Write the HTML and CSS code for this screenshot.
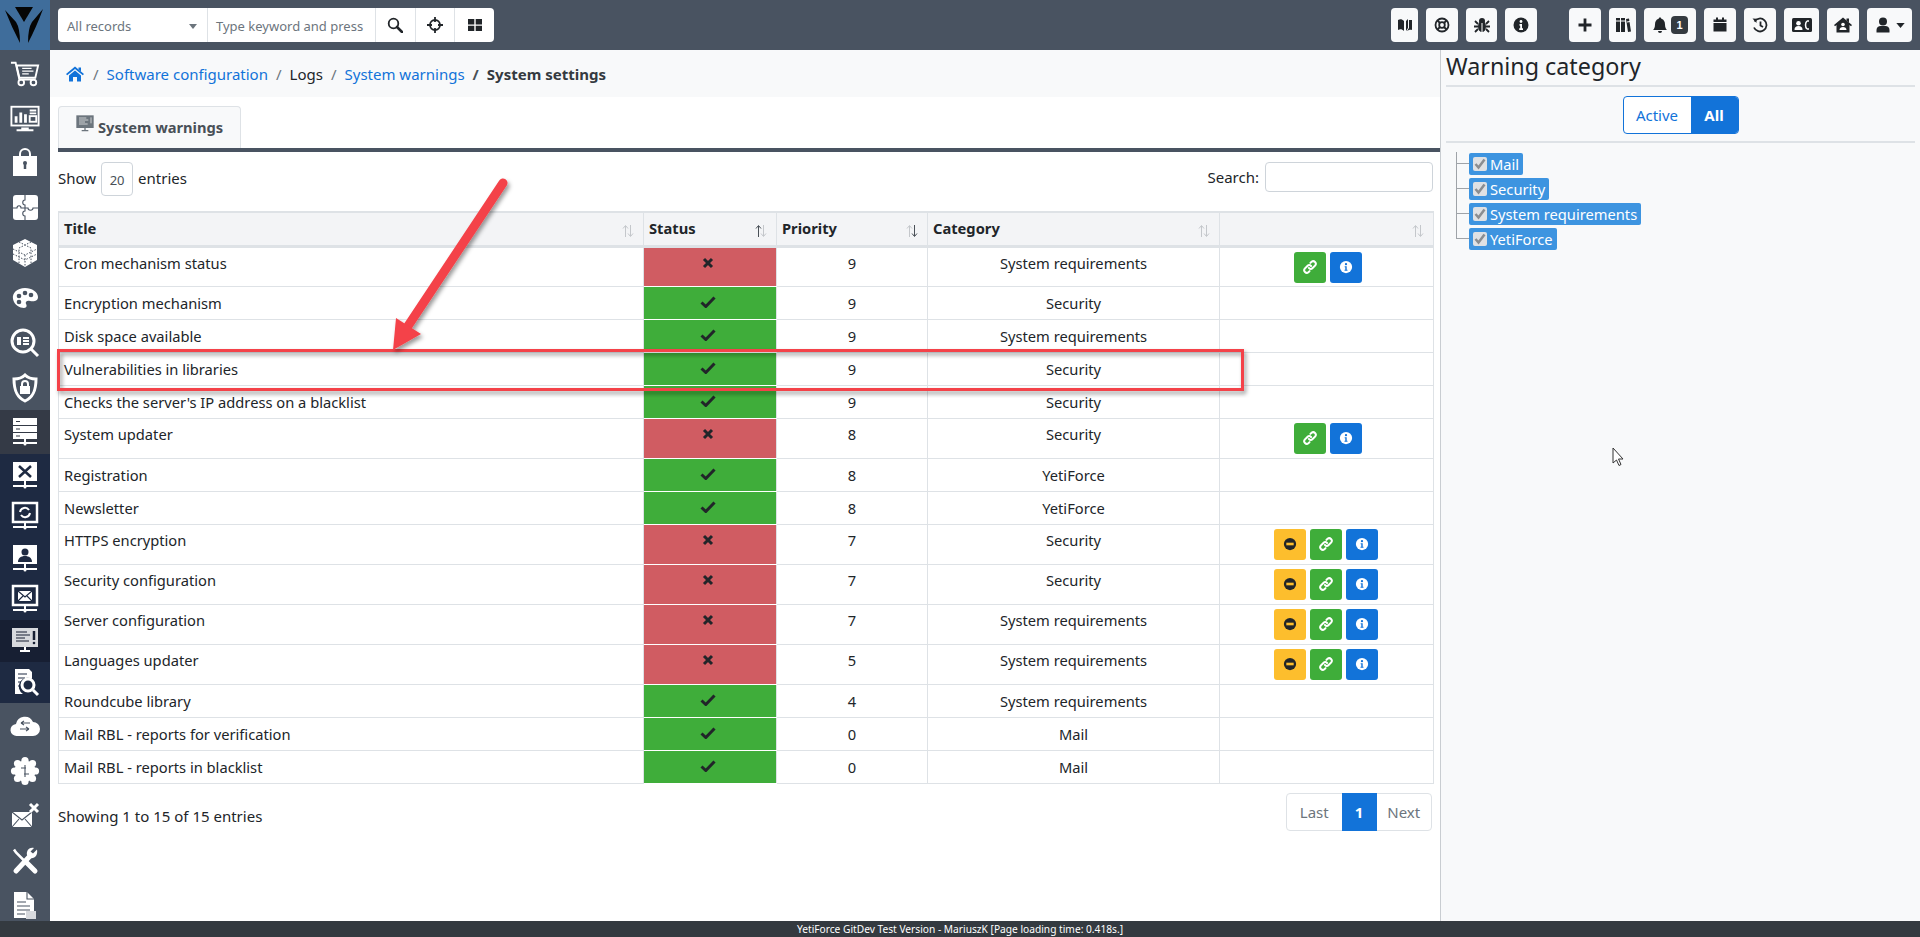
FILE: index.html
```html
<!DOCTYPE html>
<html lang="en">
<head>
<meta charset="utf-8">
<title>System warnings</title>
<link rel="stylesheet" href="styles.css">
</head>
<body>
<svg class="sprite" width="0" height="0" aria-hidden="true">
<defs>
<symbol id="s-cart" viewBox="0 0 32 30"><path d="M1 4h5l4 18h17" class="w"/><path d="M7 7h23l-3 13H10z" class="w"/><path d="M13 10h10M13 13h12M13 16h7" class="w1"/><circle cx="12" cy="25" r="3" class="w"/><circle cx="25" cy="25" r="3" class="w"/></symbol>
<symbol id="s-chart" viewBox="0 0 32 30"><rect x="1.500" y="3" width="29" height="20" class="w"/><path d="M5 20v-7h3v7zM10 20V9h3v11zM15 20v-9h3v9z" class="f"/><path d="M21 7h7M21 10h7" class="w"/><rect x="21" y="13" width="7" height="6" class="w"/><path d="M12 26h8M7 28h18" class="w"/></symbol>
<symbol id="s-lock" viewBox="0 0 30 30"><path d="M3 8h24v20H3z" class="f"/><path d="M10 8V6a5 5 0 0 1 10 0v2" class="w"/><path d="M15 15v6" class="kb"/><circle cx="15" cy="15" r="2" class="kf"/></symbol>
<symbol id="s-puzzle" viewBox="0 0 30 30"><rect x="3" y="2" width="25" height="25" rx="3" class="f"/><path d="M15 2v5c-3 0-3 5 0 5v3h-4c0-3-4-3-4 0H3M15 15h3c0 3 5 3 5 0h5M15 15v3c-3 0-3 5 0 5v4" class="k"/></symbol>
<symbol id="s-cube" viewBox="0 0 30 30"><path d="M15 1l12 6v15l-12 7-12-7V7z" class="f"/><path d="M3 11l12 6 12-6M3 16l12 6 12-6M9 4l12 6v15M21 4L9 10v15M15 17v12" class="kd"/></symbol>
<symbol id="s-palette" viewBox="0 0 30 30"><path d="M15 5C7 5 2 10 3 16c1 6 7 9 11 9 3 0 3-3 2-4-1-2 1-4 4-3 4 1 8 0 8-4 0-5-6-9-13-9z" class="f"/><circle cx="9" cy="13" r="2.300" class="kf"/><circle cx="15" cy="10" r="2.300" class="kf"/><circle cx="21" cy="12" r="2.300" class="kf"/><circle cx="9" cy="19" r="2.300" class="kf"/></symbol>
<symbol id="s-search" viewBox="0 0 30 30"><circle cx="13" cy="13" r="11" class="wb"/><rect x="7" y="9" width="4" height="8" class="f"/><path d="M13 10h6M13 13h6M13 16h6" class="w"/><path d="M21 21l7 7" class="wb"/></symbol>
<symbol id="s-shield" viewBox="0 0 30 30"><path d="M15 2c3 3 7 4 11 4 0 10-2 18-11 22C6 24 4 16 4 6c4 0 8-1 11-4z" class="wb"/><rect x="10" y="13" width="10" height="8" class="f"/><path d="M12 13v-2a3 3 0 0 1 6 0v2" class="w"/></symbol>
<symbol id="s-server" viewBox="0 0 30 30"><rect x="3" y="1" width="24" height="7" class="f"/><rect x="3" y="9" width="24" height="6" class="f"/><rect x="3" y="16" width="24" height="6" class="f"/><path d="M6 4.500h4M6 12h4M6 19h4" class="k"/><path d="M3 26h24M15 22v5" class="w"/><circle cx="15" cy="27" r="1.500" class="f"/></symbol>
<symbol id="s-mon-tools" viewBox="0 0 30 30"><rect x="3" y="2" width="24" height="19" class="f"/><path d="M9 6l12 11M21 6L9 17" class="kb"/><path d="M3 26h24M15 21v6" class="w"/><circle cx="15" cy="27" r="1.500" class="f"/></symbol>
<symbol id="s-mon-sync" viewBox="0 0 30 30"><rect x="3" y="2" width="24" height="19" class="wn"/><path d="M10 11a5 5 0 0 1 9-2M20 12a5 5 0 0 1-9 2" class="w"/><path d="M3 26h24M15 21v6" class="w"/><circle cx="15" cy="27" r="1.500" class="f"/></symbol>
<symbol id="s-mon-user" viewBox="0 0 30 30"><rect x="3" y="2" width="24" height="19" class="f"/><circle cx="15" cy="9" r="3.500" class="kf"/><path d="M8 19c0-4 3-6 7-6s7 2 7 6z" class="kf"/><path d="M3 26h24M15 21v6" class="w"/><circle cx="15" cy="27" r="1.500" class="f"/></symbol>
<symbol id="s-mon-mail" viewBox="0 0 30 30"><rect x="3" y="2" width="24" height="19" class="wn"/><rect x="8" y="7" width="14" height="10" class="f"/><path d="M8 7l7 6 7-6M8 17l5-5M22 17l-5-5" class="k"/><path d="M3 26h24M15 21v6" class="w"/><circle cx="15" cy="27" r="1.500" class="f"/></symbol>
<symbol id="s-mon-warn" viewBox="0 0 30 30"><rect x="2" y="2" width="26" height="19" class="fg"/><path d="M6 6h11M6 9h14M6 12h9M6 15h13" class="k"/><path d="M24 5v9" class="kb"/><circle cx="24" cy="17" r="1.300" class="kf"/><path d="M10 25h10M15 21v4" class="w"/></symbol>
<symbol id="s-doc-search" viewBox="0 0 30 30"><path d="M5 2h14l3 3v7a8 8 0 0 0-9 15H5z" class="f"/><path d="M8 7h9M8 11h7M8 15h4M8 19h3" class="k"/><circle cx="18" cy="18" r="6" class="wb"/><path d="M23 23l5 5" class="wb"/></symbol>
<symbol id="s-cloud" viewBox="0 0 30 30"><path d="M7 25a6 6 0 0 1-1-12 9 9 0 0 1 17-2 7 7 0 0 1 0 14z" class="f"/><path d="M11 12h9M11 12l3-2M11 12l3 2M10 18h9M19 18l-3-2M19 18l-3 2" class="k"/></symbol>
<symbol id="s-gear" viewBox="0 0 30 30"><circle cx="15" cy="15" r="10.500" class="f"/><circle cx="15" cy="4.500" r="3.600" class="f"/><circle cx="15" cy="25.500" r="3.600" class="f"/><circle cx="4.500" cy="15" r="3.600" class="f"/><circle cx="25.500" cy="15" r="3.600" class="f"/><circle cx="7.500" cy="7.500" r="3.600" class="f"/><circle cx="22.500" cy="7.500" r="3.600" class="f"/><circle cx="7.500" cy="22.500" r="3.600" class="f"/><circle cx="22.500" cy="22.500" r="3.600" class="f"/><path d="M15 9v12M11 12h5M19 18h-5" class="k"/></symbol>
<symbol id="s-mail-x" viewBox="0 0 30 30"><path d="M2 11h20v15H2z" class="f"/><path d="M2 11l10 8 10-8M2 26l7-8M22 26l-7-8" class="k"/><path d="M20 3l8 8M28 3l-8 8" class="wb"/></symbol>
<symbol id="s-tools" viewBox="0 0 30 30"><path d="M4 3.500l2 3 11 11" class="wt2"/><path d="M16 16l9 9" class="wc"/><path d="M19.500 10.500L6 25" class="wc"/><path d="M27 3.500l-4 4-2.500-2L24 2c-4-1.500-8 2-7 7l3 3c5 1 8-3 7-8.500z" class="f"/></symbol>
<symbol id="s-doc" viewBox="0 0 30 30"><path d="M4 1h13l7 7v19H4z" class="f"/><path d="M17 1v7h7" class="k"/><path d="M7 11h9M7 15h13M7 19h13M7 23h8" class="k"/><rect x="16" y="20" width="10" height="8" class="fg"/></symbol>

<symbol id="i-search" viewBox="0 0 16 16"><circle cx="6.500" cy="6.500" r="4.800" class="kx"/><path d="M10 10l5 5" class="kxw"/></symbol>
<symbol id="i-target" viewBox="0 0 16 16"><circle cx="8" cy="8" r="5" class="kx"/><path d="M8 0v5M8 11v5M0 8h5M11 8h5" class="kx"/></symbol>
<symbol id="i-grid" viewBox="0 0 16 16"><path d="M1 2h6.300v5.500H1zM8.700 2H15v5.500H8.700zM1 8.800h6.300V14H1zM8.700 8.800H15V14H8.700z"/></symbol>
<symbol id="i-book" viewBox="0 0 16 16"><path d="M1 3c2-1 4-1 6 1v10c-2-2-4-2-6-1zM9 4l2-2v9l-2 3z"/><path d="M12 3h3v10c-1.500-.5-3-.3-5 1l2-3z"/></symbol>
<symbol id="i-ring" viewBox="0 0 16 16"><circle cx="8" cy="8" r="6.500" class="kx"/><circle cx="8" cy="8" r="2.800" class="kx"/><path d="M3.500 3.500l2.500 2.500M12.500 3.500L10 6M3.500 12.500L6 10M12.500 12.500L10 10" class="kx"/></symbol>
<symbol id="i-bug" viewBox="0 0 16 16"><ellipse cx="8" cy="9.500" rx="4" ry="5.500"/><circle cx="8" cy="4" r="3"/><path d="M1 4l3 3M15 4l-3 3M0 9.500h4M16 9.500h-4M1 15l3-3M15 15l-3-3" class="kx"/><path d="M8 6v9" class="wt"/></symbol>
<symbol id="i-info" viewBox="0 0 16 16"><circle cx="8" cy="8" r="7.500"/><circle cx="8" cy="4.500" r="1.400" class="wf"/><path d="M6.500 7h2.500v4.300h1V13H6.200v-1.700h1V8.700h-.7z" class="wf"/></symbol>
<symbol id="i-plus" viewBox="0 0 16 16"><path d="M8 1.500v13M1.500 8h13" class="kxb"/></symbol>
<symbol id="i-books" viewBox="0 0 16 16"><path d="M1 1h4v14H1zM6 1h4v14H6zM11 2l3-.500 2 13-3 .500z"/><path d="M1 4h4M6 4h4M12 5l3-.500" class="wt"/></symbol>
<symbol id="i-bell" viewBox="0 0 16 16"><path d="M8 0.500c1 0 1.300.7 1.300 1.300C12 2.500 13 5 13 7.500c0 3 1 4.500 2 5.500H1c1-1 2-2.500 2-5.500C3 5 4 2.500 6.700 1.800 6.700 1.200 7 .5 8 .5z"/><path d="M6 14h4a2 2 0 0 1-4 0z"/></symbol>
<symbol id="i-cal" viewBox="0 0 16 16"><path d="M1.500 6h13v8.500h-13zM1.500 2.500h13V5h-13zM4 .5h2v3H4zM10 .5h2v3h-2z"/></symbol>
<symbol id="i-history" viewBox="0 0 16 16"><path d="M2.500 4.500A6.500 6.500 0 1 1 2 10.500" class="kx"/><path d="M0.500 1.500l4 .2v4.300z"/><path d="M8.500 4.500V8.500l2.500 1.500" class="kx"/></symbol>
<symbol id="i-card" viewBox="0 0 20 16"><rect x="0" y="1" width="20" height="14" rx="1.500"/><circle cx="6.500" cy="6.200" r="2.300" class="wf"/><path d="M2.500 13c0-3 1.500-4 4-4s4 1 4 4z" class="wf"/><path d="M15 4c-2 2-2 6 0 8" class="wl"/><path d="M15 4h2M15 12h2" class="wl"/></symbol>
<symbol id="i-home" viewBox="0 0 18 16"><path d="M9 .5L18 8l-1 1.200L15.500 8v7.500h-13V8L1 9.200 0 8z"/><path d="M12.500 1.500H15v4l-2.500-2z"/><circle cx="9" cy="7.500" r="1.800" class="wf"/><path d="M5.500 13c0-2 1.500-3 3.500-3s3.500 1 3.500 3z" class="wf"/></symbol>
<symbol id="i-user" viewBox="0 0 16 16"><circle cx="8" cy="4.500" r="4"/><path d="M1.500 15.500V13c0-2.500 2-4 4-4h5c2 0 4 1.500 4 4v2.500z"/></symbol>
<symbol id="i-caret" viewBox="0 0 10 6"><path d="M0 0h10L5 6z"/></symbol>
<symbol id="i-house" viewBox="0 0 18 16"><path d="M9 .5L18 8l-1.200 1.300L9 2.900 1.200 9.300 0 8z"/><path d="M12.500 1.500H15v4l-2.500-2zM3 9.500L9 4.500l6 5v6h-4v-4.500H7v4.500H3z"/></symbol>
<symbol id="i-cross" viewBox="0 0 12 12"><path d="M2 2l8 8M10 2l-8 8" class="cb"/></symbol>
<symbol id="i-check" viewBox="0 0 16 12"><path d="M1.500 6.500l4.300 4L14.500 1.500" class="cb"/></symbol>
<symbol id="i-link" viewBox="0 0 16 16"><path d="M6.800 9.200a3 3 0 0 0 4.200 0l3-3a3 3 0 0 0-4.200-4.200L8.500 3.300M9.200 6.800a3 3 0 0 0-4.200 0l-3 3A3 3 0 0 0 6.200 14l1.300-1.300" class="cw"/></symbol>
<symbol id="i-minus" viewBox="0 0 16 16"><circle cx="8" cy="8" r="7"/><rect x="3.800" y="6.500" width="8.400" height="3" class="yf"/></symbol>
<symbol id="i-inf" viewBox="0 0 16 16"><circle cx="8" cy="8" r="7" class="wf"/><circle cx="8" cy="4.800" r="1.300" class="bf"/><path d="M6.500 7h2.300v4h.9v1.300H6.300V11h.9V8.300h-.7z" class="bf"/></symbol>
<symbol id="i-sort" viewBox="0 0 12 14"><path d="M3.500 13V2M1 4.500L3.500 1.500 6 4.500" class="su"/><path d="M8.500 1v11M6 9.500L8.500 12.500 11 9.500" class="sd"/></symbol>
<symbol id="i-tick" viewBox="0 0 14 14"><rect width="14" height="14" rx="2" class="tb-box"/><path d="M2.500 7l3 3.500 6-8" class="tc"/></symbol>
</defs>
</svg>

<div class="app">
  <aside class="sidebar">
    <a class="logo" href="#"><svg class="logo-svg" viewBox="0 0 50 50"><path d="M15 7h18l-9 15z"/><path d="M5 10l11 12q4 6 4 21Q12 28 5 10zM43 9L32 22q-4 6-4 21 8-15 15-34z"/></svg></a>
    <nav class="menu">
      <a class="mi"><svg><use href="#s-cart"/></svg></a>
      <a class="mi"><svg><use href="#s-chart"/></svg></a>
      <a class="mi"><svg><use href="#s-lock"/></svg></a>
      <a class="mi"><svg><use href="#s-puzzle"/></svg></a>
      <a class="mi"><svg><use href="#s-cube"/></svg></a>
      <a class="mi"><svg><use href="#s-palette"/></svg></a>
      <a class="mi"><svg><use href="#s-search"/></svg></a>
      <a class="mi"><svg><use href="#s-shield"/></svg></a>
      <a class="mi open"><svg><use href="#s-server"/></svg></a>
      <a class="mi sub"><svg><use href="#s-mon-tools"/></svg></a>
      <a class="mi sub"><svg><use href="#s-mon-sync"/></svg></a>
      <a class="mi sub"><svg><use href="#s-mon-user"/></svg></a>
      <a class="mi sub"><svg><use href="#s-mon-mail"/></svg></a>
      <a class="mi sub cur"><svg><use href="#s-mon-warn"/></svg></a>
      <a class="mi sub"><svg><use href="#s-doc-search"/></svg></a>
      <a class="mi"><svg><use href="#s-cloud"/></svg></a>
      <a class="mi"><svg><use href="#s-gear"/></svg></a>
      <a class="mi"><svg><use href="#s-mail-x"/></svg></a>
      <a class="mi"><svg><use href="#s-tools"/></svg></a>
      <a class="mi"><svg><use href="#s-doc"/></svg></a>
    </nav>
  </aside>
  <div class="right">
    <header class="topbar">
      <div class="searchgroup">
        <div class="sg-select"><span>All records</span><svg class="caret"><use href="#i-caret"/></svg></div>
        <div class="sg-input">Type keyword and press</div>
        <button class="sg-btn"><svg class="ic"><use href="#i-search"/></svg></button>
        <button class="sg-btn"><svg class="ic"><use href="#i-target"/></svg></button>
        <button class="sg-btn"><svg class="ic"><use href="#i-grid"/></svg></button>
      </div>
      <div class="tb-icons">
        <button class="tb w27"><svg class="ic"><use href="#i-book"/></svg></button>
        <button class="tb w32"><svg class="ic"><use href="#i-ring"/></svg></button>
        <button class="tb w31"><svg class="ic"><use href="#i-bug"/></svg></button>
        <button class="tb w32"><svg class="ic"><use href="#i-info"/></svg></button>
        <button class="tb w32 sep"><svg class="ic"><use href="#i-plus"/></svg></button>
        <button class="tb w27"><svg class="ic"><use href="#i-books"/></svg></button>
        <button class="tb w52"><svg class="ic"><use href="#i-bell"/></svg><span class="badge">1</span></button>
        <button class="tb w32"><svg class="ic"><use href="#i-cal"/></svg></button>
        <button class="tb w32"><svg class="ic"><use href="#i-history"/></svg></button>
        <button class="tb w35"><svg class="ic wide"><use href="#i-card"/></svg></button>
        <button class="tb w32"><svg class="ic wide"><use href="#i-home"/></svg></button>
        <button class="tb w45"><svg class="ic"><use href="#i-user"/></svg><svg class="caret dark"><use href="#i-caret"/></svg></button>
      </div>
    </header>
    <div class="body">
      <main class="content">
        <nav class="crumbs">
          <svg class="home"><use href="#i-house"/></svg>
          <span class="sl">/</span><a class="lnk">Software configuration</a>
          <span class="sl">/</span><span>Logs</span>
          <span class="sl">/</span><a class="lnk">System warnings</a>
          <span class="sl b">/</span><strong>System settings</strong>
        </nav>
        <div class="pane">
          <div class="tabs"><div class="tab"><svg class="tab-ic" viewBox="0 0 30 30"><rect x="2" y="2" width="26" height="19" class="ti-a"/><path d="M6 6h11M6 9h14M6 12h9M6 15h13" class="ti-b"/><path d="M24 5v9" class="ti-b"/><path d="M10 25h10M15 21v4" class="ti-c"/></svg>System warnings</div></div>
          <div class="dt-top">
            <label class="len">Show <span class="len-box">20</span> entries</label>
            <label class="srch">Search: <span class="srch-box"></span></label>
          </div>
          <table class="grid">
            <colgroup><col class="c1"><col class="c2"><col class="c3"><col class="c4"><col class="c5"></colgroup>
            <thead><tr>
              <th>Title<svg class="sort"><use href="#i-sort"/></svg></th>
              <th>Status<svg class="sort up"><use href="#i-sort"/></svg></th>
              <th>Priority<svg class="sort down"><use href="#i-sort"/></svg></th>
              <th>Category<svg class="sort"><use href="#i-sort"/></svg></th>
              <th><svg class="sort"><use href="#i-sort"/></svg></th>
            </tr></thead>
            <tbody>
              <tr class="tall"><td>Cron mechanism status</td><td class="st bad"><svg class="mk"><use href="#i-cross"/></svg></td><td class="ct">9</td><td class="ct">System requirements</td><td class="ac"><div class="btns two"><span class="bt g"><svg><use href="#i-link"/></svg></span><span class="bt bl"><svg><use href="#i-inf"/></svg></span></div></td></tr>
              <tr><td>Encryption mechanism</td><td class="st ok"><svg class="mk"><use href="#i-check"/></svg></td><td class="ct">9</td><td class="ct">Security</td><td></td></tr>
              <tr><td>Disk space available</td><td class="st ok"><svg class="mk"><use href="#i-check"/></svg></td><td class="ct">9</td><td class="ct">System requirements</td><td></td></tr>
              <tr><td>Vulnerabilities in libraries</td><td class="st ok"><svg class="mk"><use href="#i-check"/></svg></td><td class="ct">9</td><td class="ct">Security</td><td></td></tr>
              <tr><td>Checks the server's IP address on a blacklist</td><td class="st ok"><svg class="mk"><use href="#i-check"/></svg></td><td class="ct">9</td><td class="ct">Security</td><td></td></tr>
              <tr class="tall"><td>System updater</td><td class="st bad"><svg class="mk"><use href="#i-cross"/></svg></td><td class="ct">8</td><td class="ct">Security</td><td class="ac"><div class="btns two"><span class="bt g"><svg><use href="#i-link"/></svg></span><span class="bt bl"><svg><use href="#i-inf"/></svg></span></div></td></tr>
              <tr><td>Registration</td><td class="st ok"><svg class="mk"><use href="#i-check"/></svg></td><td class="ct">8</td><td class="ct">YetiForce</td><td></td></tr>
              <tr><td>Newsletter</td><td class="st ok"><svg class="mk"><use href="#i-check"/></svg></td><td class="ct">8</td><td class="ct">YetiForce</td><td></td></tr>
              <tr class="tall"><td>HTTPS encryption</td><td class="st bad"><svg class="mk"><use href="#i-cross"/></svg></td><td class="ct">7</td><td class="ct">Security</td><td class="ac"><div class="btns"><span class="bt y"><svg><use href="#i-minus"/></svg></span><span class="bt g"><svg><use href="#i-link"/></svg></span><span class="bt bl"><svg><use href="#i-inf"/></svg></span></div></td></tr>
              <tr class="tall"><td>Security configuration</td><td class="st bad"><svg class="mk"><use href="#i-cross"/></svg></td><td class="ct">7</td><td class="ct">Security</td><td class="ac"><div class="btns"><span class="bt y"><svg><use href="#i-minus"/></svg></span><span class="bt g"><svg><use href="#i-link"/></svg></span><span class="bt bl"><svg><use href="#i-inf"/></svg></span></div></td></tr>
              <tr class="tall"><td>Server configuration</td><td class="st bad"><svg class="mk"><use href="#i-cross"/></svg></td><td class="ct">7</td><td class="ct">System requirements</td><td class="ac"><div class="btns"><span class="bt y"><svg><use href="#i-minus"/></svg></span><span class="bt g"><svg><use href="#i-link"/></svg></span><span class="bt bl"><svg><use href="#i-inf"/></svg></span></div></td></tr>
              <tr class="tall"><td>Languages updater</td><td class="st bad"><svg class="mk"><use href="#i-cross"/></svg></td><td class="ct">5</td><td class="ct">System requirements</td><td class="ac"><div class="btns"><span class="bt y"><svg><use href="#i-minus"/></svg></span><span class="bt g"><svg><use href="#i-link"/></svg></span><span class="bt bl"><svg><use href="#i-inf"/></svg></span></div></td></tr>
              <tr><td>Roundcube library</td><td class="st ok"><svg class="mk"><use href="#i-check"/></svg></td><td class="ct">4</td><td class="ct">System requirements</td><td></td></tr>
              <tr><td>Mail RBL - reports for verification</td><td class="st ok"><svg class="mk"><use href="#i-check"/></svg></td><td class="ct">0</td><td class="ct">Mail</td><td></td></tr>
              <tr><td>Mail RBL - reports in blacklist</td><td class="st ok"><svg class="mk"><use href="#i-check"/></svg></td><td class="ct">0</td><td class="ct">Mail</td><td></td></tr>
            </tbody>
          </table>
          <div class="dt-bottom">
            <div class="info">Showing 1 to 15 of 15 entries</div>
            <div class="pager"><a class="pg">Last</a><a class="pg cur">1</a><a class="pg">Next</a></div>
          </div>
        </div>
      </main>
      <aside class="panel">
        <h2 class="panel-title">Warning category</h2>
        <div class="toggle-row"><div class="toggle"><span class="tg">Active</span><span class="tg on">All</span></div></div>
        <ul class="tree">
          <li><span class="node"><svg class="tick"><use href="#i-tick"/></svg>Mail</span></li>
          <li><span class="node"><svg class="tick"><use href="#i-tick"/></svg>Security</span></li>
          <li><span class="node"><svg class="tick"><use href="#i-tick"/></svg>System requirements</span></li>
          <li><span class="node"><svg class="tick"><use href="#i-tick"/></svg>YetiForce</span></li>
        </ul>
      </aside>
    </div>
  </div>
</div>
<footer class="foot">YetiForce GitDev Test Version - MariuszK [Page loading time: 0.418s.]</footer>

<svg class="annot" viewBox="0 0 1920 937" aria-hidden="true">
  <defs><filter id="sh" x="-10%" y="-10%" width="120%" height="130%"><feDropShadow dx="2" dy="3" stdDeviation="2" flood-color="#000" flood-opacity=".4"/></filter></defs>
  <rect class="an-rect" x="58.500" y="350.500" width="1184" height="39"/>
  <g class="an-arrow"><path class="an-shaft" d="M503 183L408 326"/><path class="an-head" d="M393 350L396 318L421 334z"/></g>
  <path class="cursor" d="M1613 448v15l3.500-3 2.500 5.500 2-1-2.500-5.500h4.500z"/>
</svg>
</body>
</html>
```

FILE: styles.css
```css
* { box-sizing: border-box; }
html, body { margin: 0; height: 100%; overflow: hidden; }
body {
  font-family: "Noto Sans", "Open Sans", "DejaVu Sans", sans-serif;
  font-size: 14.700px;
  line-height: 20px;
  color: #212529;
  background: #fff;
  position: relative;
}
.sprite { position: absolute; }
.app { display: flex; height: 921px; }

/* sprite classes */
.f { fill: #fff; }
.fg { fill: #d7d9dd; }
.w { fill: none; stroke: #fff; stroke-width: 2; }
.w1 { fill: none; stroke: #fff; stroke-width: 1.300; }
.wn { fill: none; stroke: #fff; stroke-width: 2.500; }
.wb { fill: none; stroke: #fff; stroke-width: 3; }
.wc { fill: none; stroke: #fff; stroke-width: 5; stroke-linecap: round; }
.wt2 { fill: none; stroke: #fff; stroke-width: 2.500; }
.k { fill: none; stroke: var(--ib, #495361); stroke-width: 1.100; }
.kd { fill: none; stroke: var(--ib, #495361); stroke-width: 1; stroke-dasharray: 1.500 1.500; }
.kb { fill: none; stroke: var(--ib, #495361); stroke-width: 2.500; }
.kf { fill: var(--ib, #495361); }
.kx { fill: none; stroke: #212529; stroke-width: 1.800; }
.kxw { fill: none; stroke: #212529; stroke-width: 2.600; stroke-linecap: round; }
.kxb { fill: none; stroke: #212529; stroke-width: 2.800; }
.wf { fill: #fff; }
.wt { fill: none; stroke: #fff; stroke-width: 1; }
.wl { fill: none; stroke: #fff; stroke-width: 1.500; }
.cb { fill: none; stroke: #212529; stroke-width: 3; }
.cw { fill: none; stroke: #fff; stroke-width: 2.300; stroke-linecap: round; }
.yf { fill: #fdbe2d; }
.bf { fill: #1273d9; }
.su { fill: none; stroke: var(--su, #c4c7cb); stroke-width: 1; }
.sd { fill: none; stroke: var(--sd, #c4c7cb); stroke-width: 1; }
.up { --su: #495057; }
.down { --sd: #495057; }
.tb-box { fill: #dfe1e4; }
.tc { fill: none; stroke: #8a8d91; stroke-width: 2.500; }
.ti-a { fill: #6c757d; }
.ti-b { fill: none; stroke: #fff; stroke-width: 1; }
.ti-c { fill: none; stroke: #6c757d; stroke-width: 2; }

/* sidebar */
.sidebar { width: 50px; flex: none; background: #495361; display: flex; flex-direction: column; }
.logo { height: 50px; background: #3f6d9b; display: block; }
.logo-svg { width: 50px; height: 50px; fill: #050505; display: block; }
.menu { display: flex; flex-direction: column; }
.mi { height: 45px; display: flex; align-items: center; padding-left: 10px; --ib: #495361; }
.mi svg { width: 30px; height: 30px; display: block; }
.mi.open { height: 44px; background: #343a46; --ib: #343a46; }
.mi.sub { height: 41.500px; background: #1e2a42; --ib: #1e2a42; }
.mi.cur { background: #171f33; --ib: #171f33; }

/* top */
.right { flex: 1; display: flex; flex-direction: column; min-width: 0; }
.topbar {
  height: 50px; flex: none; background: #495361;
  display: flex; align-items: center; justify-content: space-between;
  padding: 0 8px;
}
.searchgroup { display: flex; height: 34px; background: #fff; border-radius: 4px; width: 436px; }
.sg-select { width: 150px; display: flex; align-items: center; justify-content: space-between; padding: 2px 10px 0 9px; color: #6c757d; font-size: 13px; border-right: 1px solid #dee2e6; }
.sg-input { width: 167px; display: flex; align-items: center; padding: 2px 0 0 8px; color: #6c757d; font-size: 13px; white-space: nowrap; overflow: hidden; }
.sg-btn { flex: 1; border: 0; border-left: 1px solid #dee2e6; background: none; padding: 0; display: flex; align-items: center; justify-content: center; }
.caret { width: 8px; height: 5px; fill: #6c757d; display: block; }
.caret.dark { fill: #212529; width: 9px; margin-left: 5px; }
.ic { width: 16px; height: 16px; fill: #212529; display: block; }
.ic.wide { width: 20px; }
.tb-icons { display: flex; gap: 8px; }
.tb { height: 34px; border: 0; border-radius: 4px; background: #f8f9fa; padding: 0; display: flex; align-items: center; justify-content: center; }
.w27 { width: 27px; }
.w31 { width: 31px; }
.w32 { width: 32px; }
.w35 { width: 35px; }
.w45 { width: 45px; }
.w52 { width: 52px; }
.sep { margin-left: 24px; }
.badge { background: #343a40; color: #fff; font-size: 11px; font-weight: 700; line-height: 18px; width: 17px; text-align: center; border-radius: 4px; margin-left: 3px; }

/* content */
.body { flex: 1; display: flex; min-height: 0; }
.content { width: 1390px; flex: none; display: flex; flex-direction: column; }
.crumbs { height: 47px; background: #f8f9fa; display: flex; align-items: center; padding-left: 16px; font-size: 15px; flex: none; }
.crumbs .sl { margin: 0 8px; color: #6c757d; }
.crumbs .sl.b { color: #495057; font-weight: 700; }
.crumbs strong { color: #343a40; }
.home { width: 18px; height: 16px; fill: #1273d9; margin-right: 1px; }
.lnk { color: #1273d9; }
.pane { padding: 9px 7px 0 8px; }
.tabs { height: 46px; border-bottom: 4px solid #495361; margin-right: -7px; }
.tab { width: 183px; height: 42px; background: #f8f9fa; border: 1px solid #dee2e6; border-bottom: 0; border-radius: 4px 4px 0 0; display: flex; align-items: center; padding: 0 0 2px 16px; font-weight: 700; color: #495057; }
.tab-ic { width: 20px; height: 20px; margin-right: 3px; margin-top: -5px; flex: none; }
.dt-top { display: flex; justify-content: space-between; margin-top: 10px; height: 34px; margin-bottom: 15px; font-size: 15px; }
.len { display: flex; align-items: center; height: 32px; }
.len-box { width: 32px; height: 34px; flex: none; border: 1px solid #ced4da; border-radius: 4px; margin: 2px 5px 0; display: flex; align-items: center; justify-content: center; color: #495057; font-size: 13px; padding-top: 1px; }
.srch { display: flex; height: 30px; align-items: center; }
.srch-box { width: 168px; height: 30px; border: 1px solid #ced4da; border-radius: 4px; margin-left: 6px; background: #fff; }

/* table */
.grid { width: 1375px; border-collapse: collapse; table-layout: fixed; }
.c1 { width: 585px; }
.c2 { width: 133px; }
.c3 { width: 151px; }
.c4 { width: 292px; }
.c5 { width: 214px; }
.grid th { height: 34px; background: #f3f4f6; border: 1px solid #dee2e6; border-top-width: 2px; border-bottom-width: 3px; text-align: left; padding: 0 5px 1px; font-weight: 700; position: relative; }
.grid td { height: 33px; border: 1px solid #dee2e6; padding: 6px 5px 0; vertical-align: top; }
.grid tr.tall td { height: 40px; padding-top: 5px; }
.grid td.ct { text-align: center; }
.grid td.st, .grid tr.tall td.st { text-align: center; border-color: #fff #dee2e6; padding: 9px 9px 0 5px; }
.grid td.ok { background: #3fad3a; }
.grid td.bad { background: #d05c62; }
.mk { width: 16px; height: 12px; display: block; margin: 0 auto; }
.sort { width: 12px; height: 14px; position: absolute; right: 9px; top: 11px; }
.grid tr.tall td.ac { padding: 4px 2px 0 0; }
.btns { display: flex; justify-content: center; gap: 4px; }
.btns.two { padding-left: 4px; }
.bt { width: 32px; height: 31px; border-radius: 3px; display: flex; align-items: center; justify-content: center; }
.bt svg { width: 14px; height: 14px; display: block; fill: #212529; }
.g { background: #3fad3a; }
.bl { background: #1273d9; }
.y { background: #fdbe2d; }

.dt-bottom { display: flex; justify-content: space-between; margin-top: 9px; font-size: 15px; }
.info { padding-top: 13px; }
.pager { display: flex; height: 38px; border: 1px solid #dee2e6; border-radius: 4px; width: 146px; margin-right: 1px; }
.pg { display: flex; align-items: center; justify-content: center; color: #6c757d; flex: 1; }
.pg.cur { background: #1273d9; color: #fff; font-weight: 700; flex: none; width: 35px; margin: -1px 0; }

/* panel */
.panel { flex: 1; background: #f8f9fa; border-left: 1px solid #c9cdd1; padding: 0 5px; }
.panel-title { font-size: 23.300px; line-height: 32px; font-weight: 400; margin: 0; height: 37px; border-bottom: 2px solid #dee2e6; }
.toggle-row { display: flex; justify-content: center; padding: 9px 0; height: 56px; border-bottom: 2px solid #dee2e6; font-size: 15px; }
.toggle { display: flex; height: 38px; border: 1px solid #1273d9; border-radius: 4px; overflow: hidden; background: #fff; }
.tg { width: 67px; display: flex; align-items: center; justify-content: center; color: #1273d9; }
.tg.on { width: 47px; background: #1273d9; color: #fff; font-weight: 700; }
.tree { list-style: none; margin: 9px 0 0 10px; padding: 0; border-left: 1px solid #9fa3a8; width: 300px; height: 87px; }
.tree li { height: 25px; position: relative; padding-left: 12px; }
.tree li::before { content: ""; position: absolute; left: 0; top: 11px; width: 12px; border-top: 1px solid #9fa3a8; }
.node { display: inline-flex; align-items: center; height: 22px; margin-top: 1px; padding: 0 4px; background: #3d94e0; color: #fff; border-radius: 2px; }
.tick { width: 14px; height: 14px; margin-right: 3px; flex: none; }

.foot { height: 16px; background: #343a40; color: #fff; font-size: 10.200px; line-height: 16px; text-align: center; }

/* annotation layer */
.annot { position: absolute; left: 0; top: 0; width: 1920px; height: 937px; pointer-events: none; }
.an-rect { fill: none; stroke: #f44249; stroke-width: 3; filter: url(#sh); }
.an-arrow { filter: url(#sh); }
.an-shaft { stroke: #f44249; stroke-width: 9; stroke-linecap: round; fill: none; }
.an-head { fill: #f44249; }
.cursor { fill: #fff; stroke: #333; stroke-width: 1; }
```
